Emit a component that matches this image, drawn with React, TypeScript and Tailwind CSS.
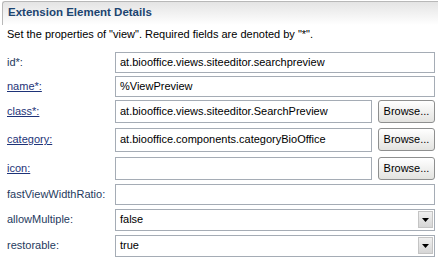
import type { ReactNode } from "react";

const font = { fontFamily: '"Liberation Sans", Arial, sans-serif' };

function Label({ text, link }: { text: string; link?: boolean }) {
  return (
    <div
      className={`w-[108px] shrink-0 text-[11px] ${
        link ? "text-[#1e3378] underline" : "text-[#253a5e]"
      }`}
    >
      {text}
    </div>
  );
}

function Box({ value, children }: { value?: string; children?: ReactNode }) {
  return (
    <div className="flex h-full flex-1 items-center border border-[#a5acb5] bg-white pl-[4px] text-[11px] text-black">
      <span className="flex-1">{value}</span>
      {children}
    </div>
  );
}

function Browse() {
  return (
    <button className="ml-[6px] h-[23px] w-[57px] shrink-0 rounded-[3px] border border-[#8e8f8f] bg-gradient-to-b from-white to-[#e3e3e0] text-[11px] text-black">
      Browse...
    </button>
  );
}

function Arrow() {
  return (
    <div className="mr-[1px] flex h-[17px] w-[15px] items-center justify-center border border-[#c4c4c4] bg-gradient-to-b from-[#f0f0f0] to-[#d6d6d6]">
      <svg width="7" height="4" viewBox="0 0 7 4">
        <path d="M0 0h7L3.5 4z" fill="#000" />
      </svg>
    </div>
  );
}

export default function App() {
  return (
    <div className="h-[261px] w-[438px] overflow-hidden bg-white" style={font}>
      <div className="ml-[2px] mt-[1px] h-[24px] rounded-tl-[3px] border-l border-t border-[#b8b8b8] bg-gradient-to-b from-[#e4e4e4] to-white pl-[5px] pt-[2px] text-[11.5px] font-bold text-[#1c4470]">
        Extension Element Details
      </div>
      <div className="pl-[7px] pt-[1px] text-[11px] text-black">
        Set the properties of "view". Required fields are denoted by "*".
      </div>
      <div className="mt-[9px] flex flex-col pl-[7px] pr-[3px]">
        <div className="flex h-[21px] items-center">
          <Label text="id*:" />
          <Box value="at.biooffice.views.siteeditor.searchpreview" />
        </div>
        <div className="mt-[3px] flex h-[21px] items-center">
          <Label text="name*:" link />
          <Box value="%ViewPreview" />
        </div>
        <div className="mt-[3px] flex h-[23px] items-center">
          <Label text="class*:" link />
          <Box value="at.biooffice.views.siteeditor.SearchPreview" />
          <Browse />
        </div>
        <div className="mt-[5px] flex h-[24px] items-center">
          <Label text="category:" link />
          <Box value="at.biooffice.components.categoryBioOffice" />
          <Browse />
        </div>
        <div className="mt-[5px] flex h-[23px] items-center">
          <Label text="icon:" link />
          <Box />
          <Browse />
        </div>
        <div className="mt-[4px] flex h-[21px] items-center">
          <Label text="fastViewWidthRatio:" />
          <Box />
        </div>
        <div className="mt-[4px] flex h-[22px] items-center">
          <Label text="allowMultiple:" />
          <Box value="false">
            <Arrow />
          </Box>
        </div>
        <div className="mt-[4px] flex h-[22px] items-center">
          <Label text="restorable:" />
          <Box value="true">
            <Arrow />
          </Box>
        </div>
      </div>
    </div>
  );
}
